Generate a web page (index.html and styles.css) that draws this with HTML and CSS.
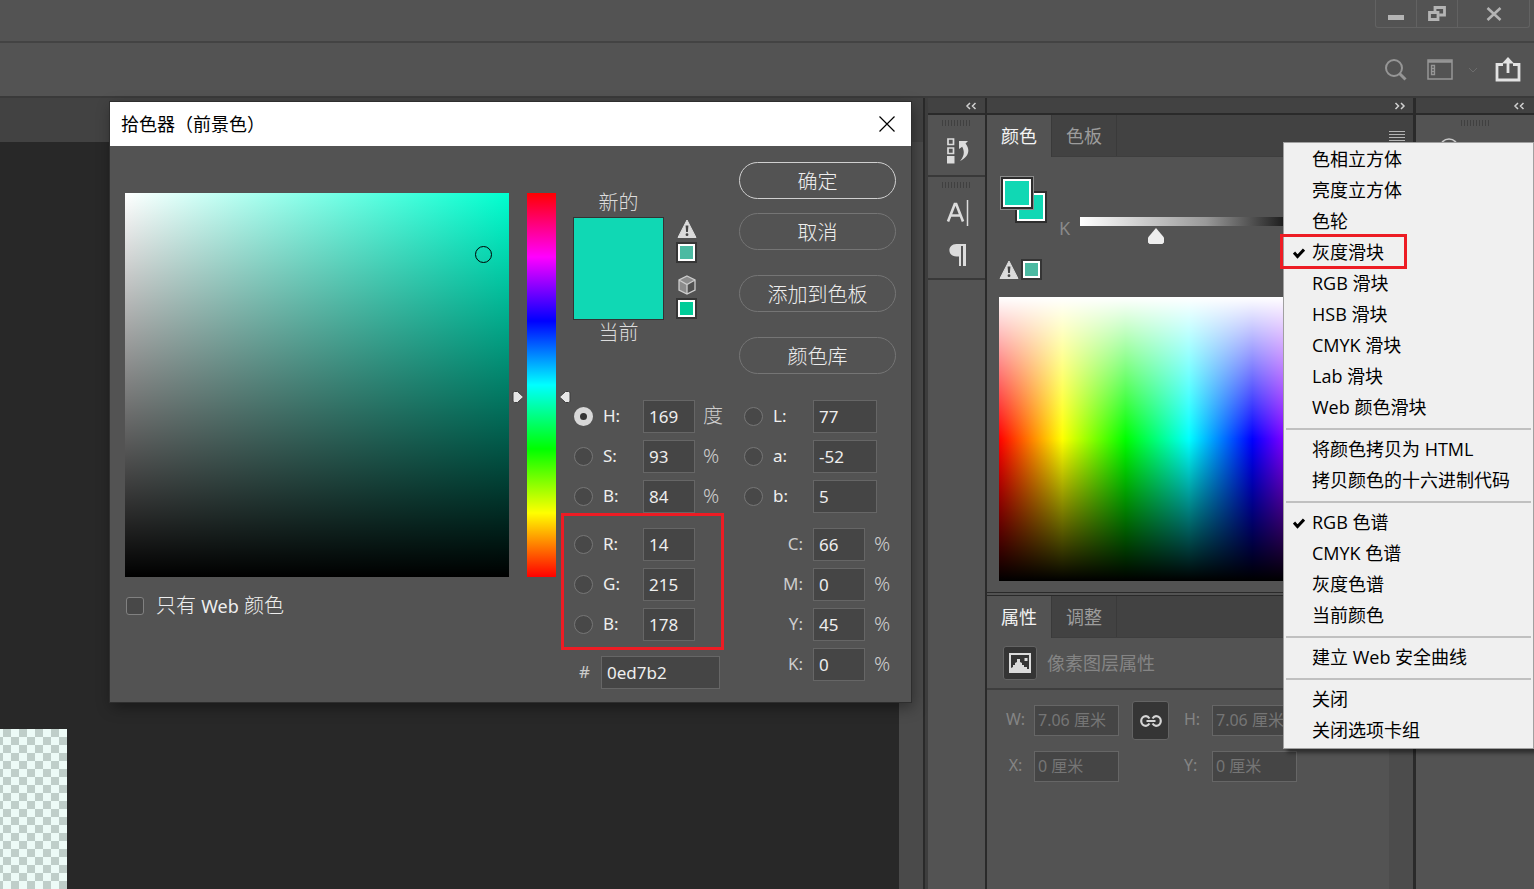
FILE: index.html
```html
<!DOCTYPE html>
<html lang="zh-CN">
<head>
<meta charset="utf-8">
<title>拾色器（前景色）</title>
<link rel="stylesheet" href="styles.css">
</head>
<body>
<svg class="defs" width="0" height="0" aria-hidden="true">
  <symbol id="warn" viewBox="0 0 20 20"><path d="M10 1 L19 18.5 H1 Z" fill="#dcdcdc" stroke="#dcdcdc" stroke-linejoin="round"/><path d="M8.6 6.5h2.8l-.5 6.5H9.1z" fill="#444"/><circle cx="10" cy="15.7" r="1.4" fill="#444"/></symbol>
  <symbol id="check" viewBox="0 0 12 12"><path d="M1 5.5 L4.5 9.5 L11 2.500" fill="none" stroke="#000" stroke-width="3"/></symbol>
  <symbol id="chev-left" viewBox="0 0 12 8"><path d="M5 1 2 4l3 3M10.500 1l-3 3 3 3" fill="none" stroke="#d0d0d0" stroke-width="1.500"/></symbol>
  <symbol id="chev-right" viewBox="0 0 12 8"><path d="m1.500 1 3 3-3 3M7 1l3 3-3 3" fill="none" stroke="#d0d0d0" stroke-width="1.500"/></symbol>
</svg>

<div class="app">
  <header class="titlebar">
    <div class="window-buttons">
      <button aria-label="最小化"><svg width="16" height="20"><path d="M0 11h16v5H0z" fill="#b4b4b4"/></svg></button>
      <button aria-label="还原"><svg width="18" height="16"><path d="M1.500 6.500h8.500v7H1.500z M7 5.500v-4h9.500v7.500h-5" fill="none" stroke="#b4b4b4" stroke-width="2.800"/></svg></button>
      <button class="wide" aria-label="关闭"><svg width="16" height="14"><path d="M1.500 1l13 12M14.500 1l-13 12" stroke="#b4b4b4" stroke-width="2.600"/></svg></button>
    </div>
  </header>

  <div class="options-bar">
    <button class="tool search" aria-label="搜索"><svg width="22" height="22" fill="none" stroke="#969696"><circle cx="9" cy="9" r="8" stroke-width="2"/><path d="M14.500 14.500l6 6" stroke-width="3"/></svg></button>
    <button class="tool" aria-label="工作区"><svg width="26" height="21" fill="none" stroke="#969696"><path d="M1 1h24v19H1z" stroke-width="1.500"/><path d="M1 2.500h24" stroke-width="2.500"/><path d="M4.500 6.500h3v3h-3zM4.500 9.500h3v3h-3zM4.500 12.500h3v3h-3z" stroke-width="1.300"/></svg></button>
    <button class="tool chevron" aria-label="工作区选项"><svg width="10" height="6"><path d="M1 1l4 4 4-4" fill="none" stroke="#6c6c6c"/></svg></button>
    <button class="tool" aria-label="共享"><svg width="26" height="25"><path d="M8 7.500H2v15.500h22V7.500h-6" fill="none" stroke="#e2e2e2" stroke-width="2.800"/><path d="M13 16V5" stroke="#e2e2e2" stroke-width="2.800"/><path d="M13 0l6 6.500H7z" fill="#e2e2e2"/></svg></button>
  </div>

  <main class="workspace">
    <section class="document">
      <div class="document-tabs"></div>
      <div class="canvas-row">
        <div class="canvas"><div class="artwork"></div></div>
        <div class="scroll-track"></div>
      </div>
    </section>

    <aside class="dock icon-dock">
      <div class="dock-head"><svg class="arrows" width="12" height="8"><use href="#chev-left"/></svg></div>
      <div class="icon-group">
        <div class="grip"></div>
        <button class="tool" aria-label="历史记录"><svg width="24" height="26"><path d="M2 1h5.500v5.500H2zM2 10h5.500v5.500H2z" fill="none" stroke="#dcdcdc" stroke-width="1.700"/><path d="M1 18h7.500v7.500H1z" fill="#dcdcdc"/><path d="M13 3h9l-2.500 2.500c5 6 3.500 13.500-5.500 17.500 4-4.500 5-9 2.200-14.200L13 11z" fill="#dcdcdc"/></svg></button>
      </div>
      <div class="icon-group second">
        <div class="grip"></div>
        <button class="tool" aria-label="字符"><svg width="24" height="28"><path d="M2 22.500L8.800 5h1.400L17 22.500M4.500 16.500h10" fill="none" stroke="#dcdcdc" stroke-width="2.600"/><path d="M21.500 1v26" stroke="#dcdcdc" stroke-width="1.500"/></svg></button>
        <button class="tool" aria-label="段落"><svg width="20" height="24"><path d="M18 1H8.500C-1 1-1 13.500 8.500 13.500H11V23h2V3h2v20h3z" fill="#dcdcdc"/></svg></button>
      </div>
    </aside>

    <aside class="dock panel-dock">
      <div class="dock-head right"><svg class="arrows" width="12" height="8"><use href="#chev-right"/></svg></div>
      <section class="panel color-panel">
        <div class="tabs">
          <button class="tab active">颜色</button><button class="tab">色板</button>
          <button class="panel-menu" aria-label="面板菜单"></button>
        </div>
        <div class="panel-body">
          <div class="color-controls">
            <div class="color-left">
              <div class="fg-bg"><span class="bg-swatch"></span><span class="fg-swatch"></span></div>
              <div class="gamut"><svg width="20" height="20"><use href="#warn"/></svg><span class="mini muted"></span></div>
            </div>
            <div class="gray-row">
              <label for="gray">K</label>
              <input id="gray" class="gray-slider" type="range" min="0" max="100" value="35">
            </div>
          </div>
          <div class="spectrum"></div>
        </div>
      </section>
      <section class="panel props-panel">
        <div class="tabs"><button class="tab active">属性</button><button class="tab">调整</button></div>
        <div class="props-head">
          <span class="layer-icon"><svg width="22" height="20"><path d="M1 1h20v18H1z" fill="#353535" stroke="#dcdcdc" stroke-width="2"/><path d="M2 18v-3l2-1v-2h2v-2l2-1V6h3v3l2 1v2h2v2h3v2h2v2z" fill="#dcdcdc"/><path d="M15.500 5h3v3h-3z" fill="#dcdcdc"/></svg></span>
          <span>像素图层属性</span>
        </div>
        <div class="props-grid">
          <label for="pw">W:</label><input id="pw" value="7.06 厘米">
          <button class="link" aria-label="链接宽高"><svg width="22" height="12" fill="none" stroke="#d6d6d6" stroke-width="2.200"><path d="M9.500 3.500C8.500 2 7.500 1.200 6 1.200a4.800 4.800 0 0 0 0 9.600c1.500 0 2.500-.8 3.500-2.300M12.500 3.500C13.500 2 14.500 1.200 16 1.200a4.800 4.800 0 0 1 0 9.600c-1.500 0-2.500-.8-3.500-2.300M6.500 6h9"/></svg></button>
          <label for="ph">H:</label><input id="ph" value="7.06 厘米">
          <label for="px">X:</label><input id="px" value="0 厘米">
          <span></span>
          <label for="py">Y:</label><input id="py" value="0 厘米">
        </div>
      </section>
    </aside>

    <aside class="dock far-dock">
      <div class="dock-head right"><svg class="arrows" width="12" height="8"><use href="#chev-left"/></svg></div>
      <div class="icon-group">
        <div class="grip"></div>
        <svg class="cc" width="20" height="20"><circle cx="10" cy="10" r="9" fill="none" stroke="#c8c8c8" stroke-width="1.500"/></svg>
      </div>
    </aside>
  </main>
</div>

<div class="dialog" role="dialog" aria-labelledby="dlg-title">
  <div class="dialog-title">
    <span id="dlg-title">拾色器（前景色）</span>
    <button class="close" aria-label="关闭"><svg width="16" height="16"><path d="M.5.5l15 15M15.500.5l-15 15" stroke="#000" stroke-width="1.200"/></svg></button>
  </div>
  <div class="dialog-body">
    <div class="pick">
      <div class="pick-fields">
        <div class="field"><span class="field-ring"></span></div>
        <div class="hue">
          <svg class="hue-mark start" width="12" height="14"><path d="M1 3Q1 1.500 2.500 1.500h3L11.500 7l-6 5.500h-3Q1 12.500 1 11z" fill="#e6e6e6" stroke="#3c3c3c"/></svg>
          <svg class="hue-mark end" width="12" height="14"><path d="M11 3Q11 1.500 9.500 1.500h-3L.5 7l6 5.500h3Q11 12.500 11 11z" fill="#e6e6e6" stroke="#3c3c3c"/></svg>
        </div>
      </div>
      <label class="web-only"><input type="checkbox"><span>只有 <span class="latin">Web</span> 颜色</span></label>
    </div>

    <div class="details">
      <div class="top">
        <div class="compare">
          <span>新的</span>
          <div class="big-swatch"></div>
          <span>当前</span>
        </div>
        <div class="alerts">
          <svg width="20" height="20"><use href="#warn"/></svg>
          <span class="mini muted"></span>
          <svg class="cube" width="20" height="20"><path d="M10 1l8 4v10l-8 4-8-4V5z" fill="#8c8c8c"/><path d="M10 9.500l8-4.500v10l-8 4z" fill="#505050"/><path d="M10 1l8 4v10l-8 4-8-4V5zM2 5l8 4.500L18 5M10 9.500V19" fill="none" stroke="#cdcdcd" stroke-width="1.300"/></svg>
          <span class="mini web"></span>
        </div>
        <div class="actions">
          <button class="pill primary">确定</button>
          <button class="pill spaced">取消</button>
          <button class="pill">添加到色板</button>
          <button class="pill">颜色库</button>
        </div>
      </div>

      <div class="values">
        <div class="col">
          <div class="group">
            <div class="row"><input type="radio" name="m" id="rH" checked><label for="rH">H:</label><input class="num" aria-label="H" value="169"><span class="unit cjk">度</span></div>
            <div class="row"><input type="radio" name="m" id="rS"><label for="rS">S:</label><input class="num" aria-label="S" value="93"><span class="unit">%</span></div>
            <div class="row"><input type="radio" name="m" id="rV"><label for="rV">B:</label><input class="num" aria-label="B" value="84"><span class="unit">%</span></div>
          </div>
          <div class="group marked">
            <div class="row"><input type="radio" name="m" id="rR"><label for="rR">R:</label><input class="num" aria-label="R" value="14"></div>
            <div class="row"><input type="radio" name="m" id="rG"><label for="rG">G:</label><input class="num" aria-label="G" value="215"></div>
            <div class="row"><input type="radio" name="m" id="rB"><label for="rB">B:</label><input class="num" aria-label="B" value="178"></div>
          </div>
          <div class="row hex"><label for="hex">#</label><input class="num" id="hex" value="0ed7b2"></div>
        </div>
        <div class="col">
          <div class="group">
            <div class="row"><input type="radio" name="m" id="rL"><label for="rL">L:</label><input class="num long" aria-label="L" value="77"></div>
            <div class="row"><input type="radio" name="m" id="ra"><label for="ra">a:</label><input class="num long" aria-label="a" value="-52"></div>
            <div class="row"><input type="radio" name="m" id="rb"><label for="rb">b:</label><input class="num long" aria-label="b" value="5"></div>
          </div>
          <div class="group cmyk">
            <div class="row"><label for="vC">C:</label><input class="num" id="vC" value="66"><span class="unit">%</span></div>
            <div class="row"><label for="vM">M:</label><input class="num" id="vM" value="0"><span class="unit">%</span></div>
            <div class="row"><label for="vY">Y:</label><input class="num" id="vY" value="45"><span class="unit">%</span></div>
            <div class="row"><label for="vK">K:</label><input class="num" id="vK" value="0"><span class="unit">%</span></div>
          </div>
        </div>
      </div>
    </div>
  </div>
</div>

<div class="menu" role="menu">
  <button role="menuitem">色相立方体</button>
  <button role="menuitem">亮度立方体</button>
  <button role="menuitem">色轮</button>
  <button role="menuitem" class="highlighted"><svg class="tick" width="12" height="12"><use href="#check"/></svg>灰度滑块</button>
  <button role="menuitem">RGB 滑块</button>
  <button role="menuitem">HSB 滑块</button>
  <button role="menuitem">CMYK 滑块</button>
  <button role="menuitem">Lab 滑块</button>
  <button role="menuitem">Web 颜色滑块</button>
  <hr>
  <button role="menuitem">将颜色拷贝为 HTML</button>
  <button role="menuitem">拷贝颜色的十六进制代码</button>
  <hr>
  <button role="menuitem"><svg class="tick" width="12" height="12"><use href="#check"/></svg>RGB 色谱</button>
  <button role="menuitem">CMYK 色谱</button>
  <button role="menuitem">灰度色谱</button>
  <button role="menuitem">当前颜色</button>
  <hr>
  <button role="menuitem">建立 Web 安全曲线</button>
  <hr>
  <button role="menuitem">关闭</button>
  <button role="menuitem">关闭选项卡组</button>
</div>
</body>
</html>
```

FILE: styles.css
```css
*, *::before, *::after { box-sizing: border-box; }

:root {
  --face: #535353;
  --strip: #424242;
  --edge: #2a2a2a;
  --line: #3e3e3e;
  --input: #454545;
  --input-edge: #666;
  --pick: #10d8b4;
}

body {
  margin: 0;
  background: var(--face);
  color: #eee;
  font: 18px/24px "Noto Sans", "Noto Sans CJK SC", sans-serif;
  overflow: hidden;
}

button, input { font: inherit; color: inherit; margin: 0; }
button { background: none; border: 0; padding: 0; }
svg { display: block; flex: none; }
.defs { position: absolute; }

.app { display: flex; flex-direction: column; min-height: 100vh; }

.titlebar {
  height: 43px;
  border-bottom: 2px solid #434343;
  display: flex;
  justify-content: flex-end;
  padding-right: 4px;
}
.window-buttons {
  display: flex;
  height: 28px;
  border: 1px solid #626262;
  border-top: 0;
  border-radius: 0 0 3px 3px;
}
.window-buttons button {
  width: 41px;
  border-right: 1px solid #626262;
  display: grid;
  place-items: center;
}
.window-buttons button.wide { width: 71px; border-right: 0; }

.options-bar {
  height: 53px;
  display: flex;
  align-items: center;
  justify-content: flex-end;
  padding-right: 13px;
}
.options-bar .search { margin-right: 20px; }
.options-bar .chevron { margin: 0 17px 0 15px; }

.workspace { flex: 1; display: flex; border-top: 2px solid #3a3a3a; }

.document {
  flex: 1;
  display: flex;
  flex-direction: column;
  border-right: 2px solid var(--edge);
}
.document-tabs { height: 44px; background: var(--strip); }
.canvas-row { flex: 1; display: flex; }
.canvas {
  flex: 1;
  background: #282828;
  display: flex;
  align-items: flex-end;
}
.artwork {
  width: 67px;
  height: 160px;
  background: repeating-conic-gradient(#bfcec9 0 25%, #edfbf7 0 50%) -5px 0 / 16px 16px;
}
.scroll-track { width: 24px; background: #4a4a4a; }

.dock { display: flex; flex-direction: column; }
.dock-head {
  height: 17px;
  background: var(--strip);
  border-bottom: 2px solid var(--edge);
  display: flex;
  align-items: center;
  padding: 0 7px 0 37px;
}
.dock-head.right { justify-content: flex-end; }
.icon-dock { width: 62px; border-left: 3px solid var(--line); border-right: 2px solid var(--edge); }
.icon-group {
  display: flex;
  flex-direction: column;
  align-items: center;
  padding: 5px 0 11px;
}
.icon-dock .icon-group { border-bottom: 2px solid #393939; }
.icon-group .grip { margin-bottom: 12px; }
.icon-dock .tool { margin-left: 3px; }
.second .grip { margin-bottom: 11px; }
.second .tool + .tool { margin-top: 16px; }
.grip {
  width: 29px;
  height: 6px;
  background: repeating-linear-gradient(90deg, #404040 0 1px, transparent 1px 3px);
}

.panel-dock { width: 426px; }
.tabs { display: flex; height: 42px; background: var(--strip); border-bottom: 1px solid var(--line); }
.tab { width: 65px; color: #9c9c9c; border-right: 1px solid #3a3a3a; }
.tab.active { background: var(--face); color: #f4f4f4; height: 42px; }
.panel-menu {
  width: 16px;
  height: 14px;
  margin: 16px 8px 0 auto;
  background: repeating-linear-gradient(#b4b4b4 0 1px, transparent 1px 3px);
}
.color-panel { border-bottom: 4px double var(--edge); }
.panel-body { padding: 19px 34px 11px 12px; }
.color-controls { display: flex; gap: 12px; height: 121px; }
.fg-bg { display: grid; width: 48px; height: 48px; margin-bottom: 35px; }
.fg-swatch, .bg-swatch {
  grid-area: 1 / 1;
  width: 28px;
  height: 28px;
  background: var(--pick);
  border: 2px solid #fff;
  outline: 2px solid #2d2d2d;
}
.fg-swatch { margin: 3px 0 0 4px; box-shadow: 0 0 0 3px #8c8c8c; }
.bg-swatch { margin: 17px 0 0 18px; }
.gamut { display: flex; gap: 2px; align-items: center; }
.mini {
  width: 17px;
  height: 17px;
  margin: 2px;
  border: 2px solid #fff;
  outline: 2px solid #353535;
}
.mini.muted { background: #4bbaa2; }
.mini.web { background: #00cc99; }
.gray-row { display: flex; flex: 1; gap: 10px; align-items: flex-start; padding: 40px 89px 0 0; color: #8a8a8a; }
.gray-slider {
  appearance: none;
  flex: 1;
  min-width: 0;
  height: 28px;
  background: linear-gradient(90deg, #fff, #bbb 40%, #999 60%, #5a5a5a 79%, #1e1e1e 97%, #111) 0 1px / 100% 9px no-repeat;
}
.gray-slider::-webkit-slider-thumb {
  appearance: none;
  width: 16px;
  height: 16px;
  margin-top: 12px;
  background: #eee;
  clip-path: polygon(50% 0, 100% 60%, 100% 90%, 90% 100%, 10% 100%, 0 90%, 0 60%);
}
.spectrum {
  height: 284px;
  background:
    linear-gradient(#fff, rgba(255, 255, 255, 0) 50%, rgba(0, 0, 0, 0) 50%, #000),
    linear-gradient(90deg, #f00, #ff0, #0f0, #0ff, #00f, #f0f, #f00);
}

.props-panel { display: flex; flex-direction: column; flex: 1; color: #858585; }
.props-head {
  display: flex;
  align-items: center;
  gap: 10px;
  height: 52px;
  padding-left: 16px;
  border-bottom: 2px solid var(--line);
}
.layer-icon, .link {
  width: 34px;
  height: 34px;
  display: grid;
  place-items: center;
  background: #353535;
  border: 1px solid #646464;
  border-radius: 3px;
}
.link { width: 37px; height: 39px; margin: 0 13px; }
.props-grid {
  flex: 1;
  display: grid;
  grid-template-columns: 37px 85px 63px 30px 85px;
  grid-template-rows: 39px 31px;
  row-gap: 11px;
  align-items: center;
  padding: 11px 0 0 10px;
  font-size: 16px;
  background: linear-gradient(#4c4c4c, #4c4c4c) right / 24px 100% no-repeat;
}
.props-grid label { padding-bottom: 3px; justify-self: center; }
.props-grid .link ~ label { justify-self: start; padding-left: 2px; }
.props-grid label[for="px"] { justify-self: center; padding-left: 0; }
.props-grid input {
  width: 100%;
  height: 31px;
  padding: 0 3px 4px;
  background: var(--input);
  border: 1px solid var(--input-edge);
  color: #757575;
}

.far-dock { width: 121px; border-left: 3px solid var(--edge); }
.far-dock .dock-head { padding-right: 9px; }
.far-dock .cc { margin-right: 52px; }

.dialog {
  position: absolute;
  left: 110px;
  top: 102px;
  width: 801px;
  background: var(--face);
  box-shadow: 0 0 0 1px #2e2e2e, 2px 5px 14px rgba(0, 0, 0, .4);
}
.dialog-title {
  height: 44px;
  display: flex;
  align-items: center;
  justify-content: space-between;
  padding: 0 16px 0 11px;
  background: #fff;
  color: #000;
}
.dialog-body { display: flex; padding: 16px 15px 13px; }
.pick { padding-top: 31px; }
.pick-fields { display: flex; gap: 18px; }
.field {
  position: relative;
  width: 384px;
  height: 384px;
  background: linear-gradient(transparent, #000), linear-gradient(90deg, #fff, #00ffd0);
}
.field-ring {
  position: absolute;
  left: 350px;
  top: 53px;
  width: 17px;
  height: 17px;
  border: 1px solid #000;
  border-radius: 50%;
}
.hue {
  position: relative;
  width: 29px;
  background: linear-gradient(#f00, #f0f, #00f, #0ff, #0f0, #ff0, #f00);
}
.hue-mark { position: absolute; top: 197px; }
.hue-mark.start { right: 32px; }
.hue-mark.end { left: 32px; }
.web-only { display: flex; align-items: center; gap: 12px; margin-top: 17px; font-size: 20px; font-weight: 300; }
.latin { font-size: 18px; font-weight: 400; }
.web-only input {
  appearance: none;
  width: 18px;
  height: 18px;
  margin-left: 1px;
  background: #484848;
  border: 1px solid #818181;
  border-radius: 3px;
}

.details { flex: 1; padding-left: 17px; }
.top { display: flex; justify-content: space-between; }
.compare {
  width: 91px;
  padding-top: 29px;
  text-align: center;
  color: #dcdcdc;
  font-size: 20px;
  font-weight: 300;
}
.big-swatch { height: 103px; margin: 2px 0 1px; background: var(--pick); border: 1px solid #333; }
.alerts { display: flex; flex-direction: column; align-items: center; padding-top: 57px; margin-right: 30px; }
.alerts .mini { margin-top: 5px; }
.alerts .cube { margin-top: 12px; }
.actions { display: flex; flex-direction: column; gap: 25px; width: 157px; }
.pill {
  height: 37px;
  padding-top: 2px;
  border: 1px solid #757575;
  border-radius: 19px;
  font-size: 20px;
  font-weight: 300;
  line-height: 24px;
}
.pill.primary { border-color: #d0d0d0; }
.pill.spaced { margin-top: -11px; }

.values { display: flex; justify-content: space-between; margin-top: 26px; font-size: 17px; }
.values .col { display: flex; flex-direction: column; gap: 15px; }
.group { display: flex; flex-direction: column; gap: 7px; }
.row { display: flex; align-items: center; height: 33px; }
.row label { width: 40px; padding: 0 0 2px 10px; }
.row input[type="radio"] {
  appearance: none;
  width: 19px;
  height: 19px;
  margin-left: 1px;
  background: #484848;
  border: 1px solid #767676;
  border-radius: 50%;
}
.row input[type="radio"]:checked { background: #353535; border: 6px solid #d8d8d8; }
.num {
  width: 52px;
  height: 33px;
  padding: 0 5px;
  margin-left: 10px;
  background: var(--input);
  border: 1px solid var(--input-edge);
}
.num.long { width: 64px; }
.unit { margin-left: 8px; padding-bottom: 2px; color: #cdcdcd; font-size: 20px; font-weight: 300; }
.values .col:last-child { width: 153px; }
.cmyk label { width: 60px; padding-left: 0; text-align: right; color: #cdcdcd; }
.cmyk .unit { margin-left: 9px; }
.hex label { width: 18px; padding-left: 6px; color: #cdcdcd; }
.hex .num { width: 119px; }

.marked { position: relative; }
.marked::after {
  content: "";
  position: absolute;
  left: -12px;
  top: -15px;
  width: 163px;
  height: 137px;
  border: 3px solid #ed1c24;
}

.menu {
  position: absolute;
  top: 142px;
  right: 0;
  width: 251px;
  padding: 1px 0 2px;
  display: flex;
  flex-direction: column;
  background: #f0f0f0;
  border: 1px solid #a0a0a0;
  box-shadow: 4px 4px 4px rgba(0, 0, 0, .45);
  color: #000;
  font-family: "Open Sans", "Noto Sans CJK SC", sans-serif;
}
.menu button {
  position: relative;
  height: 31px;
  padding: 0 0 1px 28px;
  text-align: left;
}
.menu hr { width: 245px; height: 11px; margin: 0 2px; border: 0; background: linear-gradient(#c0c0c0, #c0c0c0) 0 5px / 100% 2px no-repeat; }
.tick { position: absolute; left: 9px; top: 10px; }
.highlighted::after {
  content: "";
  position: absolute;
  left: -4px;
  top: -3px;
  width: 127px;
  height: 35px;
  border: 3px solid #ed1c24;
}
```
